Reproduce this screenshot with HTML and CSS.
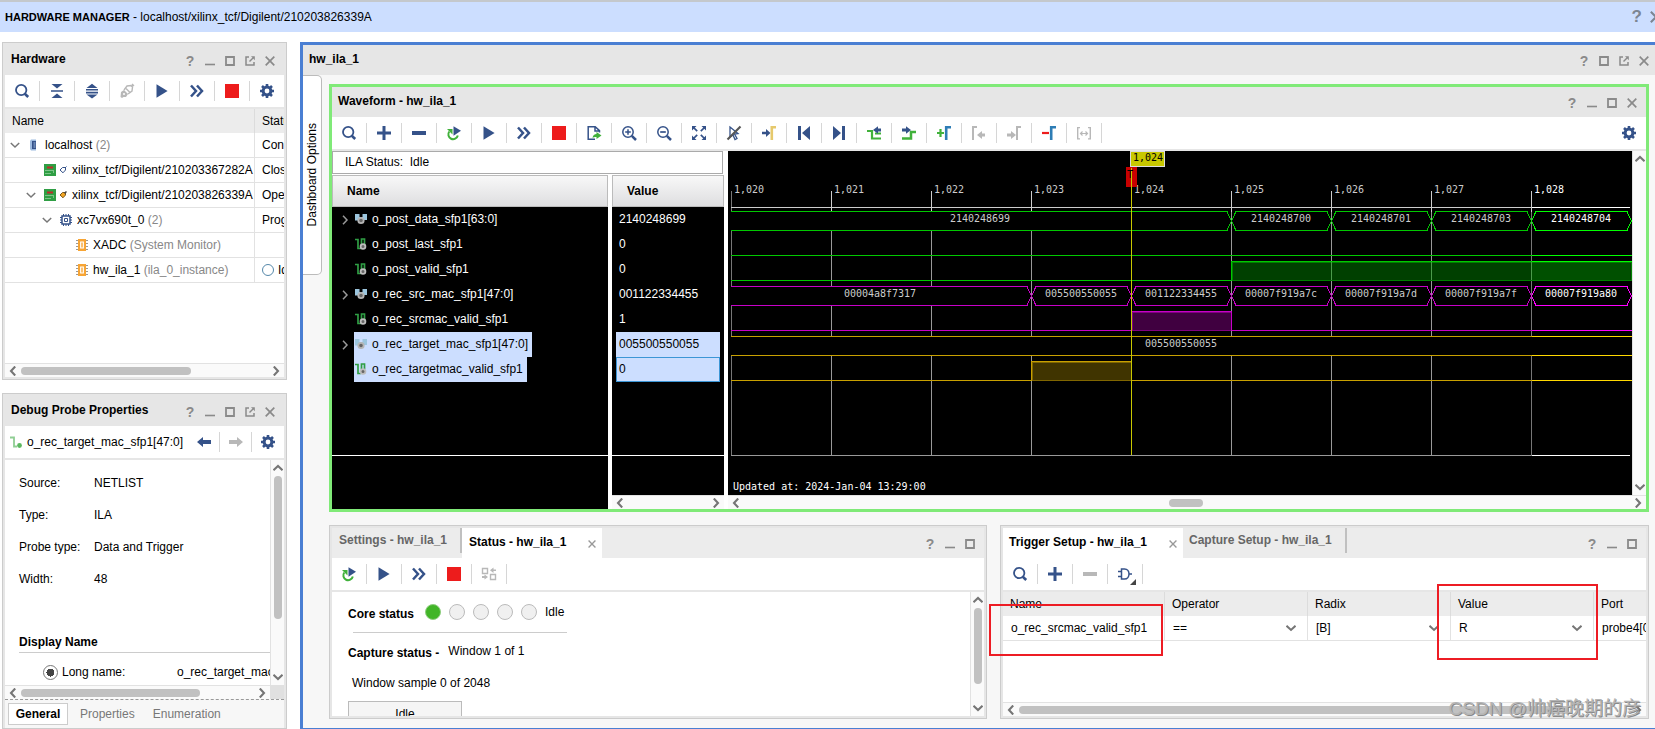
FILE: index.html
```html
<!DOCTYPE html>
<html lang="en">
<head>
<meta charset="utf-8">
<title>Hardware Manager</title>
<link rel="stylesheet" href="styles.css">
</head>
<body>
<svg class="sprite" aria-hidden="true">
  <symbol id="min" viewBox="0 0 10 10"><path d="M0 8.5h10" stroke="currentColor" stroke-width="1.6"/></symbol>
  <symbol id="max" viewBox="0 0 10 10"><path d="M1 1h8v8h-8z" fill="none" stroke="currentColor" stroke-width="1.8"/></symbol>
  <symbol id="pop" viewBox="0 0 10 10"><path d="M4 1H1v8h8V6" fill="none" stroke="currentColor" stroke-width="1.5"/><path d="M4.5 5.5L8 2" stroke="currentColor" stroke-width="1.5"/><path d="M6 .3h3.8v3.9z" fill="currentColor"/></symbol>
  <symbol id="close" viewBox="0 0 10 10"><path d="M.7.7l8.6 8.6M9.3.7L.7 9.3" stroke="currentColor" stroke-width="1.7"/></symbol>
  <symbol id="search" viewBox="0 0 16 16"><circle cx="7.2" cy="7" r="5.2" fill="none" stroke="currentColor" stroke-width="1.8"/><path d="M10.8 10.8l3.4 3.2" stroke="currentColor" stroke-width="2.6"/></symbol>
  <symbol id="collapse" viewBox="0 0 16 16" fill="currentColor"><path d="M2.5 1h11L8 5.5zM2 7.2h12v1.6H2zM2.5 15h11L8 10.5z"/></symbol>
  <symbol id="expand" viewBox="0 0 16 16" fill="currentColor"><path d="M8 .8L13.5 5h-11zM2 6h12v1.6H2zM2 8.8h12v1.6H2zM8 15.4L13.5 11.4h-11z"/></symbol>
  <symbol id="plug" viewBox="0 0 16 16"><g fill="none" stroke="currentColor" stroke-width="1.4"><path d="M5 7l3-4 4-.5 1.500 1.500-.5 4-4 3"/><path d="M7 5.500l4 4"/><path d="M12.500 3.500l2-2M13 1l2 2"/></g><path d="M2 9l3-2 4 4-2 3H4.500L3 15 1.500 14z" fill="currentColor"/><circle cx="5" cy="11" r="1" fill="#fff"/></symbol>
  <symbol id="play" viewBox="0 0 16 16"><path d="M2.500 1.200L13.600 8 2.500 14.800z" fill="currentColor"/></symbol>
  <symbol id="ff" viewBox="0 0 16 16"><path d="M2 2.500L7 8l-5 5.500M8 2.500L13 8l-5 5.500" fill="none" stroke="currentColor" stroke-width="2.500"/></symbol>
  <symbol id="stop" viewBox="0 0 16 16"><path d="M1 1h14v14H1z" fill="#ed1c1c"/></symbol>
  <symbol id="gear" viewBox="0 0 16 16" fill="none" stroke="currentColor"><circle cx="8" cy="8" r="3.900" stroke-width="3"/><path d="M8 1v3M8 12v3M1 8h3M12 8h3M3 3l2.200 2.200M10.800 10.800L13 13M13 3l-2.200 2.200M5.200 10.800L3 13" stroke-width="2.600"/></symbol>
  <symbol id="plus" viewBox="0 0 16 16"><path d="M8 1v14M1 8h14" stroke="currentColor" stroke-width="3"/></symbol>
  <symbol id="minus" viewBox="0 0 16 16"><path d="M1 8h14" stroke="currentColor" stroke-width="4"/></symbol>
  <symbol id="rerun" viewBox="0 0 16 16"><path d="M3.300 6.500A4.800 4.800 0 1 0 11.800 10.500" fill="none" stroke="#41b13b" stroke-width="2"/><path d="M1 4h5.500v5.500z" fill="#41b13b"/><path d="M7.500 1.200L15 5.800 7.500 10.800z" fill="currentColor"/></symbol>
  <symbol id="export" viewBox="0 0 16 16"><path d="M9 14.300H2.200V1.700h7l4.300 4v1.800M9 1.700V6h4.500" fill="none" stroke="currentColor" stroke-width="1.500"/><path d="M6.500 13c.5-3 2-4 4-4V7l5 3.500-5 3.500v-2c-2 0-3 0-4 1z" fill="#41b13b"/></symbol>
  <symbol id="zin" viewBox="0 0 16 16"><circle cx="7" cy="7" r="5.200" fill="none" stroke="currentColor" stroke-width="1.500"/><path d="M7 4.200v5.600M4.200 7h5.600" stroke="currentColor" stroke-width="1.500"/><path d="M10.800 10.800L15 15" stroke="currentColor" stroke-width="2.500"/></symbol>
  <symbol id="zout" viewBox="0 0 16 16"><circle cx="7" cy="7" r="5.200" fill="none" stroke="currentColor" stroke-width="1.500"/><path d="M4.200 7h5.600" stroke="currentColor" stroke-width="1.700"/><path d="M10.800 10.800L15 15" stroke="currentColor" stroke-width="2.500"/></symbol>
  <symbol id="fit" viewBox="0 0 16 16"><path d="M1 1h4.500L1 5.500zM15 1v4.500L10.500 1zM1 15v-4.500L5.500 15zM15 15h-4.500l4.500-4.500z" fill="currentColor"/><path d="M2 2l4.200 4.200M14 2L9.800 6.200M2 14l4.200-4.200M14 14L9.800 9.800" stroke="currentColor" stroke-width="1.700"/></symbol>
  <symbol id="nocursor" viewBox="0 0 16 16"><path d="M4 2l8 6.500-3.500.5 2.500 4.500-2 1-2-4.500L4 12z" fill="none" stroke="#355289" stroke-width="1.300"/><path d="M1.500 14.500L14.500 1.500" stroke="#555" stroke-width="2.200"/></symbol>
  <symbol id="totrig" viewBox="0 0 16 16"><path d="M1 6.800h4V4l4.500 4L5 12V9.300H1z" fill="currentColor"/><path d="M10.800 15V2.200H15" fill="none" stroke="#e6c96c" stroke-width="2.600"/></symbol>
  <symbol id="first" viewBox="0 0 16 16"><path d="M2 1h3v14H2zM14 1v14L6 8z" fill="currentColor"/></symbol>
  <symbol id="last" viewBox="0 0 16 16"><path d="M11 1h3v14h-3zM2 1v14l8-7z" fill="currentColor"/></symbol>
  <symbol id="prevt" viewBox="0 0 16 16"><path d="M1 6h5v7.500h9M15 8.500H9" fill="none" stroke="#41b13b" stroke-width="2.200"/><path d="M15 3.500h-3V1.200L7 5l5 3.800V6.500h3z" fill="currentColor"/></symbol>
  <symbol id="nextt" viewBox="0 0 16 16"><path d="M1 13.500h9V7h5" fill="none" stroke="#41b13b" stroke-width="2.500"/><path d="M1 3.500h4V1.200L10 5 5 8.800V6.500H1z" fill="currentColor"/></symbol>
  <symbol id="addm" viewBox="0 0 16 16"><path d="M4.500 4v8M1 8h7" stroke="#41b13b" stroke-width="2.200"/><path d="M10.200 15V2.200H15" fill="none" stroke="#2e7db5" stroke-width="2.600"/></symbol>
  <symbol id="prevm" viewBox="0 0 16 16"><path d="M2 15V2h4" fill="none" stroke="currentColor" stroke-width="2"/><path d="M14 8.500h-3V6L6 10l5 4v-2.500h3z" fill="currentColor"/></symbol>
  <symbol id="nextm" viewBox="0 0 16 16"><path d="M1 8.500h4V6l5 4-5 4v-2.500H1z" fill="currentColor"/><path d="M11 15V2h4" fill="none" stroke="currentColor" stroke-width="2"/></symbol>
  <symbol id="delm" viewBox="0 0 16 16"><path d="M1 8h7" stroke="#ed1c1c" stroke-width="2.200"/><path d="M10.200 15V2.200H15" fill="none" stroke="#2e7db5" stroke-width="2.600"/></symbol>
  <symbol id="swapm" viewBox="0 0 16 16"><path d="M1.700 2v12.500M1 2.600h3M1 13.900h3M14.300 2v12.500M12 2.600h3M12 13.900h3" fill="none" stroke="currentColor" stroke-width="1.400"/><path d="M4.500 8.500h7M6.500 6.500l-2 2 2 2M9.500 6.500l2 2-2 2" fill="none" stroke="currentColor" stroke-width="1.200"/></symbol>
  <symbol id="boxes" viewBox="0 0 16 16"><path d="M1.500 2.500h5v5h-5zM9.500 8.500h5v5h-5z" fill="none" stroke="currentColor" stroke-width="1.400"/><path d="M15 5h-2.500v2L9 4.200l3.500-2.600V3.500H15zM1 10h2.500V8.500L7 11l-3.500 2.600V12H1z" fill="currentColor"/></symbol>
  <symbol id="gate" viewBox="0 0 16 16"><path d="M4.500 3h3c3 0 4.500 2.500 4.500 5s-1.500 5-4.500 5h-3zM1 5.500h3.500M1 10.500h3.500M12 8h3" fill="none" stroke="currentColor" stroke-width="1.500"/></symbol>
  <symbol id="back" viewBox="0 0 16 16"><path d="M1 8l6-5v3h8v4H7v3z" fill="currentColor"/></symbol>
  <symbol id="fwd" viewBox="0 0 16 16"><path d="M15 8L9 3v3H1v4h8v3z" fill="currentColor"/></symbol>
  <symbol id="down" viewBox="0 0 10 10"><path d="M.8 3L5 7l4.200-4" fill="none" stroke="currentColor" stroke-width="1.500"/></symbol>
  <symbol id="right" viewBox="0 0 10 10"><path d="M3 .8L7 5l-4 4.200" fill="none" stroke="currentColor" stroke-width="1.500"/></symbol>
  <symbol id="sl" viewBox="0 0 10 10"><path d="M7.200.5L3 5l4.200 4.500" fill="none" stroke="#757575" stroke-width="2.100"/></symbol>
  <symbol id="sr" viewBox="0 0 10 10"><path d="M2.800.5L7 5 2.800 9.500" fill="none" stroke="#757575" stroke-width="2.100"/></symbol>
  <symbol id="su" viewBox="0 0 10 10"><path d="M.5 7.200L5 3l4.500 4.200" fill="none" stroke="#757575" stroke-width="2.100"/></symbol>
  <symbol id="sd" viewBox="0 0 10 10"><path d="M.5 2.800L5 7l4.500-4.200" fill="none" stroke="#757575" stroke-width="2.100"/></symbol>
  <symbol id="server" viewBox="0 0 12 12"><path d="M3 .5h5v11H3L2 10V2z" fill="#9dbbe0"/><path d="M4 2h4v8H4z" fill="#355289"/><path d="M5.500 4h2M5.500 6h2M5.500 8h2" stroke="#9dbbe0"/></symbol>
  <symbol id="board" viewBox="0 0 12 12"><path d="M0 0h12v12H0z" fill="#2f9e44"/><path d="M3 2.500h6v2H3z" fill="#c22b2b"/><path d="M1 6.500h9M9.500 6.500V9M1 9.500h6" stroke="#7cc588"/></symbol>
  <symbol id="tag0" viewBox="0 0 8 8"><path d="M1 4l2.500-2.500h3V4L4 6.800z" fill="#fff" stroke="#355289"/><path d="M6 2l1.500-1.500" stroke="#355289"/></symbol>
  <symbol id="tag1" viewBox="0 0 8 8"><path d="M1 4l2.500-2.500h3V4L4 6.800z" fill="#f5a623" stroke="#7a5a20"/><path d="M5.500 2.500l2-2" stroke="#444" stroke-width="1.500"/></symbol>
  <symbol id="chip" viewBox="0 0 12 12"><path d="M2 2h8v8H2z" fill="none" stroke="#355289" stroke-width="1.500"/><path d="M4.500 4.500h3v3h-3z" fill="none" stroke="#355289"/><path d="M3.500 0v2M6 0v2M8.500 0v2M3.500 10v2M6 10v2M8.500 10v2M0 3.500h2M0 6h2M0 8.500h2M10 3.500h2M10 6h2M10 8.500h2" stroke="#355289"/></symbol>
  <symbol id="core" viewBox="0 0 12 12"><path d="M0 1.500h12M0 4.500h12M0 7.500h12M0 10.500h12" stroke="#999"/><path d="M2 0h8v12H2z" fill="#f7a535"/><path d="M4.700 3h2.600v6H4.700z" fill="none" stroke="#fff" stroke-width="1.200"/></symbol>
  <symbol id="bus" viewBox="0 0 12 12"><path d="M0 1h4.500v3h3V1H12v6H9L6 4 3 7.500H0z" fill="#9cc6de"/><circle cx="6" cy="7.500" r="2.700" fill="#666" stroke="#b5b5b5" stroke-width="1.800"/></symbol>
  <symbol id="sig" viewBox="0 0 12 12"><path d="M0 1.500h3v9h3M6.500 6V1h3v5" fill="none" stroke="#2f9e44" stroke-width="1.700"/><circle cx="8" cy="8.500" r="2.400" fill="#666" stroke="#bdbdbd" stroke-width="1.800"/></symbol>
  <symbol id="net" viewBox="0 0 12 12"><path d="M0 1.500h4v9h3" fill="none" stroke="#8fce93" stroke-width="1.800"/><circle cx="9.500" cy="9.500" r="2.400" fill="#5cb860"/></symbol>
</svg>

<header class="appbar">
  <h1><b>HARDWARE MANAGER</b> - localhost/xilinx_tcf/Digilent/210203826339A</h1>
  <div class="app-btns"><button aria-label="Help">?</button><button aria-label="Close"><svg><use href="#close"/></svg></button></div>
</header>

<main class="workspace">
  <aside class="side">
    <section class="panel hardware">
      <div class="titlebar"><h2>Hardware</h2><div class="wbtns"><button aria-label="Help">?</button><button aria-label="Minimize"><svg><use href="#min"/></svg></button><button aria-label="Maximize"><svg><use href="#max"/></svg></button><button aria-label="Float"><svg><use href="#pop"/></svg></button><button aria-label="Close"><svg><use href="#close"/></svg></button></div></div>
      <div class="toolbar">
        <button aria-label="Search"><svg><use href="#search"/></svg></button><button aria-label="Collapse all"><svg><use href="#collapse"/></svg></button><button aria-label="Expand all"><svg><use href="#expand"/></svg></button><button aria-label="Auto connect" disabled><svg><use href="#plug"/></svg></button><button aria-label="Run trigger"><svg><use href="#play"/></svg></button><button aria-label="Run trigger immediate"><svg><use href="#ff"/></svg></button><button aria-label="Stop trigger"><svg><use href="#stop"/></svg></button><button class="plain" aria-label="Settings"><svg><use href="#gear"/></svg></button>
      </div>
      <div class="tree-wrap">
      <table class="tree">
        <thead><tr><th>Name</th><th class="st">Status</th></tr></thead>
        <tbody>
          <tr><td><div class="node"><svg class="tw"><use href="#down"/></svg><svg class="ic"><use href="#server"/></svg><span>localhost <i>(2)</i></span></div></td><td>Connected</td></tr>
          <tr><td><div class="node l1 leaf"><svg class="ic"><use href="#board"/></svg><svg class="tag"><use href="#tag0"/></svg><span>xilinx_tcf/Digilent/210203367282A</span></div></td><td>Closed</td></tr>
          <tr><td><div class="node l1"><svg class="tw"><use href="#down"/></svg><svg class="ic"><use href="#board"/></svg><svg class="tag"><use href="#tag1"/></svg><span>xilinx_tcf/Digilent/210203826339A</span></div></td><td>Open</td></tr>
          <tr><td><div class="node l2"><svg class="tw"><use href="#down"/></svg><svg class="ic"><use href="#chip"/></svg><span>xc7vx690t_0 <i>(2)</i></span></div></td><td>Programmed</td></tr>
          <tr><td><div class="node l3 leaf"><svg class="ic"><use href="#core"/></svg><span>XADC <i>(System Monitor)</i></span></div></td><td></td></tr>
          <tr><td><div class="node l3 leaf"><svg class="ic"><use href="#core"/></svg><span>hw_ila_1 <i>(ila_0_instance)</i></span></div></td><td><div class="idle"><span class="ring"></span>Idle</div></td></tr>
        </tbody>
      </table>
      </div>
      <div class="hscroll"><svg><use href="#sl"/></svg><div class="track"><div class="thumb t-hw"></div></div><svg><use href="#sr"/></svg></div>
    </section>

    <section class="panel probe">
      <div class="titlebar"><h2>Debug Probe Properties</h2><div class="wbtns"><button aria-label="Help">?</button><button aria-label="Minimize"><svg><use href="#min"/></svg></button><button aria-label="Maximize"><svg><use href="#max"/></svg></button><button aria-label="Float"><svg><use href="#pop"/></svg></button><button aria-label="Close"><svg><use href="#close"/></svg></button></div></div>
      <div class="toolbar nav"><svg class="ic"><use href="#net"/></svg><span class="grow">o_rec_target_mac_sfp1[47:0]</span><button aria-label="Back"><svg><use href="#back"/></svg></button><button aria-label="Forward" disabled><svg><use href="#fwd"/></svg></button><button class="plain" aria-label="Settings"><svg><use href="#gear"/></svg></button></div>
      <div class="scrollbody">
        <div class="props">
          <dl>
            <dt>Source:</dt><dd>NETLIST</dd>
            <dt>Type:</dt><dd>ILA</dd>
            <dt>Probe type:</dt><dd>Data and Trigger</dd>
            <dt>Width:</dt><dd>48</dd>
          </dl>
          <h3>Display Name</h3>
          <div class="radio"><input type="radio" id="longname" name="disp" checked><label for="longname">Long name:</label><span>o_rec_target_mac_sfp1[47:0]</span></div>
        </div>
        <div class="vscroll"><svg><use href="#su"/></svg><div class="track"><div class="thumb v-probe"></div></div><svg><use href="#sd"/></svg></div>
      </div>
      <div class="hrow"><div class="hscroll"><svg><use href="#sl"/></svg><div class="track"><div class="thumb t-probe"></div></div><svg><use href="#sr"/></svg></div><div class="corner"></div></div>
      <nav class="subtabs"><button class="on">General</button><button>Properties</button><button>Enumeration</button></nav>
    </section>
  </aside>

  <section class="dash">
    <div class="titlebar dash-title"><h2>hw_ila_1</h2><div class="wbtns"><button aria-label="Help">?</button><button aria-label="Maximize"><svg><use href="#max"/></svg></button><button aria-label="Float"><svg><use href="#pop"/></svg></button><button aria-label="Close"><svg><use href="#close"/></svg></button></div></div>
    <div class="dash-body">
      <button class="dash-opts">Dashboard Options</button>
      <div class="dash-grid">
        <section class="wave">
          <div class="titlebar"><h2>Waveform - hw_ila_1</h2><div class="wbtns"><button aria-label="Help">?</button><button aria-label="Minimize"><svg><use href="#min"/></svg></button><button aria-label="Maximize"><svg><use href="#max"/></svg></button><button aria-label="Close"><svg><use href="#close"/></svg></button></div></div>
          <div class="toolbar">
            <button aria-label="Search"><svg><use href="#search"/></svg></button><button aria-label="Add"><svg><use href="#plus"/></svg></button><button aria-label="Remove"><svg><use href="#minus"/></svg></button><button aria-label="Auto re-trigger"><svg><use href="#rerun"/></svg></button><button aria-label="Run trigger"><svg><use href="#play"/></svg></button><button aria-label="Run trigger immediate"><svg><use href="#ff"/></svg></button><button aria-label="Stop trigger"><svg><use href="#stop"/></svg></button><button aria-label="Export data"><svg><use href="#export"/></svg></button><button aria-label="Zoom in"><svg><use href="#zin"/></svg></button><button aria-label="Zoom out"><svg><use href="#zout"/></svg></button><button aria-label="Zoom fit"><svg><use href="#fit"/></svg></button><button aria-label="Zoom to cursor"><svg><use href="#nocursor"/></svg></button><button aria-label="Go to trigger"><svg><use href="#totrig"/></svg></button><button aria-label="Go to first"><svg><use href="#first"/></svg></button><button aria-label="Go to last"><svg><use href="#last"/></svg></button><button aria-label="Previous transition"><svg><use href="#prevt"/></svg></button><button aria-label="Next transition"><svg><use href="#nextt"/></svg></button><button aria-label="Add marker"><svg><use href="#addm"/></svg></button><button aria-label="Previous marker" disabled><svg><use href="#prevm"/></svg></button><button aria-label="Next marker" disabled><svg><use href="#nextm"/></svg></button><button aria-label="Delete marker"><svg><use href="#delm"/></svg></button><button aria-label="Swap cursors" disabled><svg><use href="#swapm"/></svg></button><span class="grow"></span><button class="plain" aria-label="Settings"><svg><use href="#gear"/></svg></button>
          </div>
          <div class="wave-body">
            <div class="lists">
              <div class="ila-status">ILA Status:&nbsp; Idle</div>
              <div class="cols">
                <div class="names">
                  <div class="colhead">Name</div>
                  <ul>
                    <li><svg class="tw"><use href="#right"/></svg><span class="sg"><svg class="ic"><use href="#bus"/></svg>o_post_data_sfp1[63:0]</span></li>
                    <li><span class="sg"><svg class="ic"><use href="#sig"/></svg>o_post_last_sfp1</span></li>
                    <li><span class="sg"><svg class="ic"><use href="#sig"/></svg>o_post_valid_sfp1</span></li>
                    <li><svg class="tw"><use href="#right"/></svg><span class="sg"><svg class="ic"><use href="#bus"/></svg>o_rec_src_mac_sfp1[47:0]</span></li>
                    <li><span class="sg"><svg class="ic"><use href="#sig"/></svg>o_rec_srcmac_valid_sfp1</span></li>
                    <li class="sel"><svg class="tw"><use href="#right"/></svg><span class="sg"><svg class="ic"><use href="#bus"/></svg>o_rec_target_mac_sfp1[47:0]</span></li>
                    <li class="sel"><span class="sg"><svg class="ic"><use href="#sig"/></svg>o_rec_targetmac_valid_sfp1</span></li>
                  </ul>
                  <div class="foot"></div>
                </div>
                <div class="values">
                  <div class="colhead">Value</div>
                  <ul>
                    <li>2140248699</li><li>0</li><li>0</li><li>001122334455</li><li>1</li><li class="sel">005500550055</li><li class="sel focus">0</li>
                  </ul>
                  <div class="foot"></div>
                  <div class="hscroll"><svg><use href="#sl"/></svg><div class="track"></div><svg><use href="#sr"/></svg></div>
                </div>
              </div>
            </div>
            <div class="plot">
              <div class="plot-row">
                <svg class="trace" role="img" aria-label="Captured waveform">
                  <g class="grid">
                    <path class="dim" d="M3.500 40v265"/>
                    <path d="M103.500 61v244M203.500 61v244M303.500 61v244M503.500 61v244M603.500 61v244M703.500 61v244"/>
                    <path class="dim" d="M803.500 61v244"/>
                    <path class="tick" d="M103.500 40v21M203.500 40v21M303.500 40v21M503.500 40v21M603.500 40v21M703.500 40v21M803.500 40v21"/>
                    <path class="tick" d="M3 56.500H803"/><path class="hot" d="M804 56.500H902"/>
                    <path d="M3 304.500H803"/><path class="hot" d="M804 304.500H902"/>
                  </g>
                  <g class="lbl"><text x="6" y="42">1,020</text><text x="106" y="42">1,021</text><text x="206" y="42">1,022</text><text x="306" y="42">1,023</text><text x="406" y="42">1,024</text><text x="506" y="42">1,025</text><text x="606" y="42">1,026</text><text x="706" y="42">1,027</text><text class="hot" x="806" y="42">1,028</text></g>
                  <g class="green">
                    <path class="bus" d="M3 60.500H499l4.500 9.500-4.500 9.500H3"/>
                    <path class="bus" d="M508 60.500h91l4.500 9.500-4.500 9.500h-91l-4.500-9.500zM608 60.500h91l4.500 9.500-4.500 9.500h-91l-4.500-9.500zM708 60.500h91l4.500 9.500-4.500 9.500h-91l-4.500-9.500z"/>
                    <path class="bus hot" d="M808 60.500h91l4.500 9.500-4.500 9.500h-91l-4.500-9.500z"/>
                    <path d="M3 104.500H804"/><path class="hot" d="M804 104.500H904"/>
                    <path class="hi" d="M504 111.500h399v18h-399z"/>
                    <path class="hi2" d="M804 112h98v17h-98z"/>
                    <path d="M3 129.500H503.500V110.500H804"/><path class="hot" d="M804 110.500H904"/>
                    <path class="over" d="M603.500 111v18M703.500 111v18M803.500 111v18"/>
                  </g>
                  <g class="purple">
                    <path class="bus" d="M3 135.500H299l4.500 9.500-4.500 9.500H3"/>
                    <path class="bus" d="M308 135.500h91l4.500 9.500-4.500 9.500h-91l-4.500-9.500zM408 135.500h91l4.500 9.500-4.500 9.500h-91l-4.500-9.500zM508 135.500h91l4.500 9.500-4.500 9.500h-91l-4.500-9.500zM608 135.500h91l4.500 9.500-4.500 9.500h-91l-4.500-9.500zM708 135.500h91l4.500 9.500-4.500 9.500h-91l-4.500-9.500z"/>
                    <path class="bus hot" d="M808 135.500h91l4.500 9.500-4.500 9.500h-91l-4.500-9.500z"/>
                    <path class="hi" d="M404 161.500h99v18h-99z"/>
                    <path d="M3 179.500H403.500V160.500H503.500V179.500H804"/><path class="hot" d="M804 179.500H904"/>
                  </g>
                  <g class="gold">
                    <path class="cover" d="M3 186h901v18H3z"/>
                    <path d="M3 185.500H804M3 204.500H804"/><path class="hot" d="M804 185.500H904M804 204.500H904"/>
                    <path class="hi" d="M304 211.500h99v18h-99z"/>
                    <path d="M3 229.500H303.500V210.500H403.500V229.500H804"/><path class="hot" d="M804 229.500H904"/>
                  </g>
                  <g class="lbl mid">
                    <text x="252" y="71">2140248699</text><text x="553" y="71">2140248700</text><text x="653" y="71">2140248701</text><text x="753" y="71">2140248703</text><text class="hot" x="853" y="71">2140248704</text>
                    <text x="152" y="146">00004a8f7317</text><text x="353" y="146">005500550055</text><text x="453" y="146">001122334455</text><text x="553" y="146">00007f919a7c</text><text x="653" y="146">00007f919a7d</text><text x="753" y="146">00007f919a7f</text><text class="hot" x="853" y="146">00007f919a80</text>
                    <text x="453" y="196">005500550055</text>
                  </g>
                  <g class="marker">
                    <path class="trig" d="M398 16h11v20h-11z"/><path class="flag" d="M402.500.5h34v15h-34z"/>
                    <text x="405" y="10">1,024</text>
                    <path class="cur" d="M403.500 17V304"/>
                    <text x="399" y="27">T</text>
                  </g>
                  <text class="upd" x="5" y="339">Updated at: 2024-Jan-04 13:29:00</text>
                </svg>
                <div class="vscroll"><svg><use href="#su"/></svg><div class="track"></div><svg><use href="#sd"/></svg></div>
              </div>
              <div class="hscroll"><svg><use href="#sl"/></svg><div class="track"><div class="thumb t-wave"></div></div><svg><use href="#sr"/></svg></div>
            </div>
          </div>
        </section>

        <div class="lower">
          <section class="panel status">
            <div class="tabbar"><button class="tab sep">Settings - hw_ila_1</button><div class="tab on"><span>Status - hw_ila_1</span><button aria-label="Close tab"><svg><use href="#close"/></svg></button></div><span class="grow"></span><div class="wbtns"><button aria-label="Help">?</button><button aria-label="Minimize"><svg><use href="#min"/></svg></button><button aria-label="Maximize"><svg><use href="#max"/></svg></button></div></div>
            <div class="toolbar"><button aria-label="Auto re-trigger"><svg><use href="#rerun"/></svg></button><button aria-label="Run trigger"><svg><use href="#play"/></svg></button><button aria-label="Run trigger immediate"><svg><use href="#ff"/></svg></button><button aria-label="Stop trigger"><svg><use href="#stop"/></svg></button><button aria-label="Switch view" disabled><svg><use href="#boxes"/></svg></button></div>
            <div class="scrollbody">
              <div class="core">
                <div class="line"><b>Core status</b><span class="leds"><i class="lit"></i><i></i><i></i><i></i><i></i></span><span>Idle</span></div>
                <hr>
                <div class="line cap"><b>Capture status -</b><span>Window 1 of 1</span></div>
                <p>Window sample 0 of 2048</p>
                <div class="progress">Idle</div>
              </div>
              <div class="vscroll"><svg><use href="#su"/></svg><div class="track"><div class="thumb v-status"></div></div><svg><use href="#sd"/></svg></div>
            </div>
          </section>

          <section class="panel trigger">
            <div class="tabbar"><div class="tab on"><span>Trigger Setup - hw_ila_1</span><button aria-label="Close tab"><svg><use href="#close"/></svg></button></div><button class="tab sep">Capture Setup - hw_ila_1</button><span class="grow"></span><div class="wbtns"><button aria-label="Help">?</button><button aria-label="Minimize"><svg><use href="#min"/></svg></button><button aria-label="Maximize"><svg><use href="#max"/></svg></button></div></div>
            <div class="toolbar"><button aria-label="Search"><svg><use href="#search"/></svg></button><button aria-label="Add probe"><svg><use href="#plus"/></svg></button><button aria-label="Remove probe" disabled><svg><use href="#minus"/></svg></button><button class="more" aria-label="Trigger condition"><svg><use href="#gate"/></svg></button></div>
            <div class="trig-wrap">
              <table class="trig-table">
                <thead><tr><th class="c0">Name</th><th>Operator</th><th>Radix</th><th>Value</th><th>Port</th></tr></thead>
                <tbody><tr><td>o_rec_srcmac_valid_sfp1</td><td><select aria-label="Operator"><option>==</option></select></td><td><select aria-label="Radix"><option>[B]</option></select></td><td><select aria-label="Value"><option>R</option></select></td><td>probe4[0]</td></tr></tbody>
              </table>
              <div class="note note-name"></div>
              <div class="note note-value"></div>
            </div>
            <div class="hscroll"><svg><use href="#sl"/></svg><div class="track"><div class="thumb t-trig"></div></div><svg><use href="#sr"/></svg></div>
            <div class="watermark">CSDN @帅癌晚期的彦</div>
          </section>
        </div>
      </div>
    </div>
  </section>
</main>
</body>
</html>
```

FILE: styles.css
```css
* { box-sizing: border-box; }
body {
  margin: 0;
  height: 100vh;
  display: flex;
  flex-direction: column;
  overflow: hidden;
  background: #fff;
  color: #000;
  font: 12px "Liberation Sans", "Noto Sans CJK SC", sans-serif;
}
h1, h2, h3, p, dl, dd, ul { margin: 0; padding: 0; }
ul { list-style: none; }
button { padding: 0; border: 0; background: none; color: inherit; font: inherit; }
svg { display: block; flex: none; }
.sprite { position: absolute; width: 0; height: 0; }
.grow { flex: 1; }

.appbar {
  flex: none;
  height: 32px;
  display: flex;
  justify-content: space-between;
  align-items: center;
  padding-left: 5px;
  overflow: hidden;
  background: #ccdeff;
  border-top: 2px solid #c4c8cc;
}
.appbar h1 { font-size: 12px; font-weight: 400; line-height: 28px; }
.appbar h1 b { font-size: 11px; }
.app-btns { display: flex; align-items: center; gap: 8px; margin-right: -7px; color: #7c8592; }
.app-btns button { font-size: 17px; font-weight: 700; }
.app-btns svg { width: 12px; height: 12px; }

.workspace { flex: 1; min-height: 0; display: flex; gap: 13px; padding: 10px 0 0 2px; }
.side { flex: none; width: 285px; display: flex; flex-direction: column; gap: 13px; }
.panel {
  position: relative;
  display: flex;
  flex-direction: column;
  min-width: 0;
  min-height: 0;
  border: 1px solid #ccc;
  box-shadow: inset 0 0 0 2px #e6e6e6;
  padding: 2px;
  background: #fff;
}
.hardware { flex: 1 1 0; }
.probe { flex: 1 1 0; padding-bottom: 0; }

.titlebar { flex: none; height: 30px; display: flex; justify-content: space-between; padding: 0 9px 0 6px; background: #e6e6e6; }
.titlebar h2 { font-size: 12px; line-height: 28px; }
.wbtns { display: flex; gap: 10px; padding-top: 11px; color: #8a8a8a; }
.wbtns button { width: 10px; height: 10px; font-size: 14px; font-weight: 700; line-height: 10px; }
.wbtns svg { width: 10px; height: 10px; }

.toolbar { flex: none; height: 34px; display: flex; align-items: center; border-bottom: 2px solid #e6e6e6; background: #fff; color: #355289; }
.toolbar button { width: 35px; height: 20px; display: flex; align-items: center; justify-content: center; border-right: 1px solid #d6d6d6; }
.toolbar button:disabled { color: #b8b8b8; }
.toolbar button svg { width: 16px; height: 16px; }
.toolbar .plain { width: 34px; border-right: 0; }

.tree-wrap { flex: 1; min-height: 0; overflow: hidden; }
table { border-collapse: separate; border-spacing: 0; table-layout: fixed; width: 100%; }
th { height: 24px; padding: 0 0 0 7px; font-weight: 400; text-align: left; background: #ececec; border-right: 1px solid #dcdcdc; }
td { height: 25px; padding: 0 0 0 7px; border-right: 1px solid #e2e2e2; border-bottom: 1px solid #e2e2e2; overflow: hidden; white-space: nowrap; }
th:last-child, td:last-child { border-right: 0; overflow: hidden; }
.tree .st { width: 29px; }
.tree td:first-child { padding-left: 5px; }
.node { display: flex; align-items: center; gap: 5px; }
.node i { color: #888; font-style: normal; }
.l1 { padding-left: 16px; }
.l2 { padding-left: 32px; }
.l3 { padding-left: 48px; }
.tw { width: 10px; height: 10px; color: #777; }
.node .tw { margin-right: 3px; }
.leaf::before { content: ""; flex: none; width: 10px; margin-right: 3px; }
.l1 .tag { margin-left: -2px; }
.ic { width: 12px; height: 12px; }
.tag { width: 8px; height: 8px; }
.idle { display: flex; align-items: center; gap: 4px; }
.ring { flex: none; width: 12px; height: 12px; border: 1px solid #58a; border-radius: 50%; }

.hscroll { flex: none; height: 14px; display: flex; align-items: center; background: #fafafa; border-top: 1px solid #e2e2e2; }
.hscroll svg { width: 10px; height: 10px; margin: 0 3px; }
.track { flex: 1; min-width: 0; min-height: 0; }
.thumb { background: #c1c1c1; border-radius: 4px; }
.hscroll .thumb { height: 8px; }
.vscroll { flex: none; width: 14px; display: flex; flex-direction: column; align-items: center; background: #fafafa; border-left: 1px solid #e2e2e2; }
.vscroll svg { width: 10px; height: 10px; margin: 3px 0; }
.vscroll .thumb { width: 8px; }
.t-hw { width: 69%; }
.t-probe { width: 77%; }
.t-wave { width: 34px; margin-left: 48%; }
.t-trig { width: 90%; }
.v-probe { height: 74%; }
.v-status { height: 83%; }

.nav { padding-left: 5px; color: #000; }
.nav .ic { margin-right: 5px; }
.nav button { width: 32px; color: #355289; }
.nav .plain { width: 32px; }
.scrollbody { flex: 1; min-height: 0; display: flex; }
.props { flex: 1; min-width: 0; overflow: hidden; padding: 7px 0 0 14px; white-space: nowrap; }
.props dl { display: grid; grid-template-columns: 75px 1fr; grid-auto-rows: 32px; align-items: center; }
.props h3 { margin-top: 37px; height: 21px; font-size: 12px; line-height: 21px; border-bottom: 1px solid #ccc; }
.radio { height: 38px; display: flex; align-items: center; }
.radio > * { flex: none; }
.radio input {
  appearance: none;
  width: 15px;
  height: 15px;
  margin: 0 4px 0 24px;
  border: 1px solid #777;
  border-radius: 50%;
  background: radial-gradient(circle, #444 0 4px, #fff 4px);
}
.radio label { width: 115px; }
.hrow { flex: none; display: flex; }
.hrow .hscroll { flex: 1; }
.corner { width: 14px; background: #e0e0e0; }
.subtabs { flex: none; height: 29px; display: flex; align-items: center; gap: 6px; padding-left: 3px; border-top: 1px dashed #999; background: #f7f7f7; color: #777; }
.subtabs button { height: 22px; padding: 0 6px; }
.subtabs .on { width: 60px; border: 1px solid #ccc; background: #fff; color: #000; font-weight: 700; }

.dash { flex: 1; min-width: 0; display: flex; flex-direction: column; border: 3px solid #4a7fd3; border-right: 0; border-bottom-width: 1px; background: #f7f7f7; }
.dash-title { padding-right: 6px; }
.dash-body { flex: 1; min-height: 0; display: flex; gap: 7px; }
.dash-opts { flex: none; align-self: flex-start; width: 19px; height: 200px; background: #fff; border: 1px solid #bbb; border-left: 0; border-radius: 0 5px 5px 0; writing-mode: sideways-lr; line-height: 18px; text-align: center; }
.dash-grid { flex: 1; min-width: 0; display: flex; flex-direction: column; gap: 13px; padding: 9px 6px 9px 0; }
.wave { flex: 422 1 0; min-height: 0; display: flex; flex-direction: column; border: 3px solid #80ea78; background: #fff; }
.wave-body { flex: 1; min-height: 0; display: flex; gap: 4px; }
.lists { flex: none; width: 392px; display: flex; flex-direction: column; }
.ila-status { height: 23px; margin: 0 1px 1px 0; padding-left: 12px; line-height: 21px; border: 1px solid #aaa; }
.cols { flex: 1; min-height: 0; display: flex; gap: 4px; }
.names { flex: 1; }
.values { width: 112px; }
.names, .values { display: flex; flex-direction: column; color: #fff; background: #000; }
.colhead { flex: none; height: 32px; padding-left: 14px; line-height: 30px; font-weight: 700; color: #000; border: 1px solid #bbb; background: linear-gradient(#f8f8f8, #dedee0); }
.cols ul { flex: 1; min-height: 0; overflow: hidden; border-bottom: 1px solid #fff; }
.cols li { height: 25px; display: flex; align-items: center; }
.names li { padding-left: 22px; position: relative; }
.names .tw { position: absolute; left: 8px; color: #999; }
.sg { height: 25px; display: flex; align-items: center; gap: 5px; padding: 0 4px 2px 1px; }
.sel .sg { color: #000; background: #ccdeff; }
.values li { margin: 0 4px; padding: 0 0 2px 3px; }
.values .sel { color: #000; background: #ccdeff; }
.values .focus { padding-left: 2px; border: 1px solid #3c96d6; }
.names .foot { height: 53px; }
.values .foot { height: 39px; }

.plot { flex: 1; min-width: 0; display: flex; flex-direction: column; }
.plot-row { flex: 1; min-height: 0; display: flex; background: #000; }
.trace { flex: 1; min-width: 0; height: 100%; background: #000; }
.trace path { fill: none; shape-rendering: crispEdges; }
.trace .bus { fill: #000; }
.grid { stroke: #999; }
.grid .dim { stroke: #777; }
.grid .tick { stroke: #ccc; }
.grid .hot { stroke: #fff; }
.green { stroke: #00c800; }
.green .hot { stroke: #0f0; }
.trace .green .hi { fill: #004000; stroke: #008000; }
.trace .green .hi2 { fill: #005000; stroke: none; }
.green .over { stroke: #4c9a4c; }
.purple { stroke: #c800c8; }
.purple .hot { stroke: #f0f; }
.trace .purple .hi { fill: #400040; stroke: #800080; }
.gold { stroke: #c8a000; }
.gold .hot { stroke: #ffd800; }
.trace .gold .hi { fill: #403400; stroke: #806600; }
.trace .gold .cover { fill: #000; stroke: none; }
.trace text { font: 10px "DejaVu Sans Mono", monospace; fill: #ccc; }
.trace .mid text { text-anchor: middle; }
.trace text.hot, .trace .upd { fill: #fff; stroke: none; }
.trace .marker .flag { fill: #c8c800; stroke: #ddd; }
.trace .marker .trig { fill: #c80000; }
.marker .cur { stroke: #c8c800; }
.trace .marker text { fill: #000; }

.lower { flex: 194 1 0; min-height: 0; display: flex; gap: 13px; }
.status { flex: 652 1 0; }
.trigger { flex: 643 1 0; }
.tabbar { flex: none; height: 30px; display: flex; padding-right: 9px; background: #ececec; font-weight: 700; }
.tab { height: 25px; padding: 0 14px 0 7px; display: flex; line-height: 23px; color: #666; font-weight: 700; white-space: nowrap; align-items: center; }
.tab.sep { border-right: 2px solid #c0c0c0; }
.status .tab.sep { width: 130px; }
.trigger .tab.sep { width: 164px; padding-left: 6px; }
.tab.on { height: 30px; padding: 0 6px 0 7px; justify-content: space-between; align-items: flex-start; line-height: 28px; background: #fff; color: #000; }
.status .tab.on { width: 140px; }
.trigger .tab.on { width: 180px; padding-left: 6px; }
.tab.on button { margin-top: 12px; color: #999; }
.tab.on svg { width: 8px; height: 8px; }
.core { flex: 1; min-width: 0; overflow: hidden; padding-left: 16px; }
.line { height: 40px; display: flex; align-items: center; }
.line b { padding-top: 4px; }
.leds { display: flex; gap: 8px; margin: 0 8px 0 11px; }
.leds i { width: 16px; height: 16px; border: 1px solid #bbb; border-radius: 50%; background: #f0f0f0; }
.leds .lit { background: #41b527; border-color: #8fce80; }
.core hr { width: 214px; height: 1px; margin: 0 0 0 5px; border: 0; background: #ccc; }
.cap { height: 36px; gap: 9px; }
.core p { line-height: 28px; padding-left: 4px; }
.progress { width: 114px; height: 26px; margin-top: 4px; line-height: 24px; text-align: center; border: 1px solid #bbb; background: #f5f5f5; }

.more { position: relative; }
.more::after { content: ""; position: absolute; right: 6px; bottom: -1px; border: 3px solid #444; border-top-color: transparent; border-left-color: transparent; }
.trig-wrap { position: relative; flex: 1; min-height: 0; }
.trig-table .c0 { width: 162px; }
.trig-table th { width: 143px; }
.trig-table th:last-child { width: auto; }
.trig-table td:first-child { padding-left: 8px; }
.trig-table td:last-child { padding-left: 8px; }
.trig-table select {
  appearance: none;
  width: 100%;
  border: 0;
  padding: 0 0 0 1px;
  font: inherit;
  color: #000;
  background: url('data:image/svg+xml,<svg xmlns="http://www.w3.org/2000/svg" width="10" height="10"><path d="M.5 2.800L5 7l4.500-4.200" fill="none" stroke="%23757575" stroke-width="2"/></svg>') no-repeat right 11px center;
}
.note { position: absolute; z-index: 2; border: 2px solid #ed1c24; }
.note-name { left: -14px; top: 12px; width: 174px; height: 52px; }
.note-value { left: 434px; top: -8px; width: 161px; height: 76px; }
.watermark { position: absolute; right: 7px; bottom: -3px; z-index: 3; font-size: 19px; line-height: 24px; color: #b4b4b4; text-shadow: 1px 1px 0 #8a8a8a; white-space: nowrap; }
```
